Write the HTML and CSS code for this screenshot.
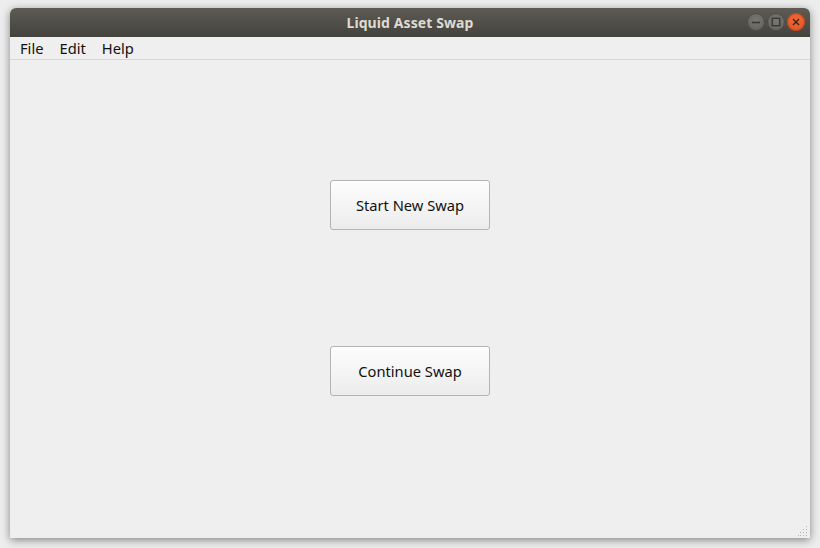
FILE: index.html
```html
<!DOCTYPE html>
<html>
<head>
<meta charset="utf-8">
<title>Liquid Asset Swap</title>
<link rel="stylesheet" href="styles.css">
</head>
<body>
<div class="window">
  <div class="titlebar">
    <span class="title">Liquid Asset Swap</span>
    <div class="controls">
      <span class="ctl gray">
        <svg width="18" height="18" viewBox="0 0 18 18"><line x1="5" y1="9.5" x2="13" y2="9.5" stroke="#3a3935" stroke-width="1.6"/></svg>
      </span>
      <span class="ctl gray">
        <svg width="18" height="18" viewBox="0 0 18 18"><rect x="5.3" y="5.3" width="7.4" height="7.4" fill="none" stroke="#3a3935" stroke-width="1.4"/></svg>
      </span>
      <span class="ctl close">
        <svg width="18" height="18" viewBox="0 0 18 18"><path d="M6 6L12 12M12 6L6 12" stroke="#3a2a20" stroke-width="1.5"/></svg>
      </span>
    </div>
  </div>
  <div class="menubar">
    <span class="menu">File</span>
    <span class="menu">Edit</span>
    <span class="menu">Help</span>
  </div>
  <div class="content">
    <button class="btn">Start New Swap</button>
    <button class="btn">Continue Swap</button>
  </div>
  <svg class="grip" width="10" height="10" viewBox="0 0 10 10">
    <g fill="#b5b5b5">
      <rect x="8" y="0" width="1" height="1"/>
      <rect x="5" y="3" width="1" height="1"/><rect x="8" y="3" width="1" height="1"/>
      <rect x="2" y="6" width="1" height="1"/><rect x="5" y="6" width="1" height="1"/><rect x="8" y="6" width="1" height="1"/>
      <rect x="0" y="9" width="1" height="1"/><rect x="2" y="9" width="1" height="1"/><rect x="5" y="9" width="1" height="1"/><rect x="8" y="9" width="1" height="1"/>
    </g>
  </svg>
</div>
</body>
</html>
```
FILE: styles.css
```css
html, body {
  margin: 0;
  padding: 0;
}
body {
  width: 820px;
  height: 548px;
  background: #ededed;
  font-family: "Noto Sans", "Open Sans", sans-serif;
  overflow: hidden;
}
.window {
  position: relative;
  margin: 8px 10px 0 10px;
  width: 800px;
  height: 530px;
  display: flex;
  flex-direction: column;
  background: #efefef;
  border-radius: 6px 6px 0 0;
  box-shadow: 0 2px 9px rgba(0,0,0,0.45);
}
.titlebar {
  height: 29px;
  flex: none;
  display: flex;
  align-items: center;
  justify-content: center;
  position: relative;
  background: linear-gradient(#5d5b54, #43423d);
  border-radius: 6px 6px 0 0;
}
.title {
  color: #dfdbd2;
  font-weight: bold;
  font-size: 14px;
  letter-spacing: 0.1px;
}
.controls {
  position: absolute;
  right: 5px;
  top: 5px;
  display: flex;
  gap: 2px;
}
.ctl {
  width: 18px;
  height: 18px;
  border-radius: 50%;
  display: flex;
}
.ctl.gray {
  background: radial-gradient(circle at 50% 40%, #77766f, #605f59);
  box-shadow: inset 0 0 0 1px #4a4944;
}
.ctl.close {
  background: radial-gradient(circle at 50% 40%, #f2683a, #e0501f);
  box-shadow: inset 0 0 0 1px #b8461e;
}
.menubar {
  height: 22px;
  flex: none;
  display: flex;
  align-items: center;
  padding-left: 2px;
  border-bottom: 1px solid #d6d6d6;
  background: #efefef;
}
.menu {
  font-size: 14.7px;
  color: #111;
  padding: 0 8px;
}
.content {
  flex: 1;
  display: flex;
  flex-direction: column;
  align-items: center;
  padding-top: 120px;
  gap: 116px;
}
.btn {
  width: 160px;
  height: 50px;
  border: 1px solid #b4b4b4;
  border-radius: 3px;
  background: linear-gradient(#fdfdfd, #ececec);
  font-family: "Noto Sans", "Open Sans", sans-serif;
  font-size: 14.7px;
  color: #111;
  padding: 0;
}
.grip {
  position: absolute;
  right: 2px;
  bottom: 2px;
}
```
